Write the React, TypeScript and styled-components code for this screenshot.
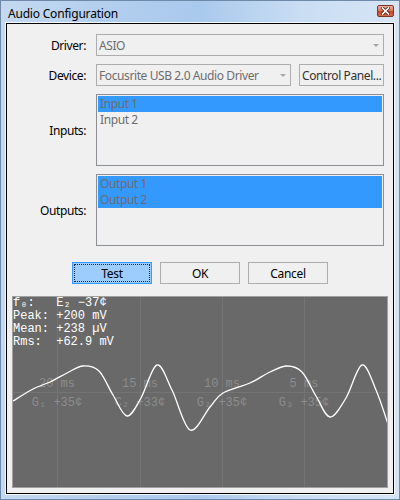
import React from "react";
import styled, { createGlobalStyle } from "styled-components";

const Global = createGlobalStyle`
  html, body { margin: 0; padding: 0; background: #fff; }
  body { font-family: "Noto Sans", "Liberation Sans", sans-serif; }
`;

const UI = `"Noto Sans", "Liberation Sans", sans-serif`;
const MONO = `"Liberation Mono", "DejaVu Sans Mono", monospace`;

const Window = styled.div`
  width: 400px;
  height: 500px;
  box-sizing: border-box;
  border: 1px solid #6f8aa8;
  background: linear-gradient(to right, #c4d9f0 0%, #b3cfee 25%, #a9c9ed 50%, #c9ddf3 75%, #d6e5f6 100%);
  display: flex;
  flex-direction: column;
`;

const TitleBar = styled.div`
  height: 22px;
  flex: none;
  display: flex;
  align-items: flex-start;
  justify-content: space-between;
  padding: 0 5px 0 7px;
`;

const Title = styled.div`
  font-family: ${UI};
  font-size: 12px;
  letter-spacing: -0.2px;
  line-height: 16px;
  padding-top: 5px;
  color: #000;
`;

const CloseButton = styled.div`
  width: 17px;
  height: 12px;
  margin-top: 4px;
  box-sizing: border-box;
  border: 1px solid #7d3524;
  border-radius: 2px;
  background: linear-gradient(to bottom, #eab19c 0%, #d97a5e 45%, #c6452b 55%, #d86a4c 100%);
  display: flex;
  align-items: center;
  justify-content: center;
`;

const ClientWrap = styled.div`
  flex: 1;
  display: flex;
  padding: 0 5px 5px 5px;
`;

const Client = styled.div`
  flex: 1;
  border: 1px solid #000;
  box-shadow: 0 0 0 1px #f6f9fc;
  background: #f0f0f0;
  display: flex;
  flex-direction: column;
`;

const Form = styled.div`
  display: grid;
  grid-template-columns: 79px 1fr;
  column-gap: 10px;
  row-gap: 8px;
  padding: 10px 9px 0 0;
  align-items: center;
`;

const Label = styled.div`
  font-family: ${UI};
  font-size: 12px;
  letter-spacing: -0.4px;
  color: #000;
  text-align: right;
`;

const FieldRow = styled.div`
  display: flex;
  gap: 8px;
`;

const Combo = styled.div`
  height: 22px;
  box-sizing: border-box;
  flex: 1;
  border: 1px solid #adadad;
  background: #f0f0f0;
  display: flex;
  align-items: center;
  justify-content: space-between;
  padding: 0 4px 0 2px;
  font-family: ${UI};
  font-size: 12px;
  letter-spacing: -0.4px;
  color: #6d6d6d;
  white-space: nowrap;
  overflow: hidden;
`;

const Arrow = styled.span`
  width: 0;
  height: 0;
  border-left: 3px solid transparent;
  border-right: 3px solid transparent;
  border-top: 3px solid #a6a6a6;
  margin-top: 1px;
`;

const SideButton = styled.div`
  width: 85px;
  height: 22px;
  box-sizing: border-box;
  flex: none;
  border: 1px solid #adadad;
  background: #f0f0f0;
  font-family: ${UI};
  font-size: 12px;
  letter-spacing: -0.4px;
  color: #333;
  display: flex;
  align-items: center;
  padding: 0 2px;
  white-space: nowrap;
  overflow: hidden;
`;

const ListBox = styled.div`
  height: 72px;
  box-sizing: border-box;
  border: 1px solid #8b8e92;
  background: #f0f0f0;
  padding: 1px;
  display: flex;
  flex-direction: column;
`;

const ListItem = styled.div<{ $selected?: boolean }>`
  height: 16px;
  line-height: 16px;
  padding-left: 2px;
  font-family: ${UI};
  font-size: 12px;
  letter-spacing: -0.4px;
  color: #6d6d6d;
  background: ${(p) => (p.$selected ? "#3399ff" : "transparent")};
`;

const Buttons = styled.div`
  display: flex;
  justify-content: center;
  gap: 8px;
  margin-top: 16px;
`;

const Button = styled.div<{ $focused?: boolean }>`
  width: 80px;
  height: 22px;
  box-sizing: border-box;
  border: 1px solid ${(p) => (p.$focused ? "#3399ff" : "#adadad")};
  background: ${(p) => (p.$focused ? "#9dcdfd" : "#f0f0f0")};
  padding: 1px;
  display: flex;
`;

const ButtonInner = styled.div<{ $focused?: boolean }>`
  flex: 1;
  border: 1px dotted ${(p) => (p.$focused ? "#222" : "transparent")};
  display: flex;
  align-items: center;
  justify-content: center;
  font-family: ${UI};
  font-size: 12px;
  letter-spacing: -0.3px;
  color: #000;
`;

const Scope = styled.div`
  position: relative;
  height: 192px;
  box-sizing: border-box;
  margin: 12px 5px 5px 5px;
  border: 1px solid #a0a0a0;
  background: #696969;
  overflow: hidden;
`;

const ScopeSvg = styled.svg`
  display: block;
  width: 374px;
  height: 190px;
`;

const Readout = styled.pre`
  position: absolute;
  left: 0;
  top: 0;
  margin: 0;
  font-family: ${MONO};
  font-size: 12px;
  line-height: 13px;
  color: #fff;
`;

type P = [number, number];

function smoothPath(pts: P[]): string {
  let d = `M${pts[0][0]},${pts[0][1]}`;
  for (let i = 0; i < pts.length - 1; i++) {
    const p0 = pts[i - 1] || pts[i];
    const p1 = pts[i];
    const p2 = pts[i + 1];
    const p3 = pts[i + 2] || p2;
    const c1x = p1[0] + (p2[0] - p0[0]) / 6;
    const c1y = p1[1] + (p2[1] - p0[1]) / 6;
    const c2x = p2[0] - (p3[0] - p1[0]) / 6;
    const c2y = p2[1] - (p3[1] - p1[1]) / 6;
    d += ` C${c1x.toFixed(1)},${c1y.toFixed(1)} ${c2x.toFixed(1)},${c2y.toFixed(1)} ${p2[0]},${p2[1]}`;
  }
  return d;
}

const wave: P[] = [
  [13, 401], [33, 389], [50, 382], [67, 373], [83, 366], [99, 371], [113, 395], [127, 416],
  [141, 398], [157, 365], [172, 390], [190, 430], [210, 407], [223, 393], [250, 383],
  [270, 372], [287, 366], [302, 372], [316, 396], [330, 417], [346, 398], [362, 365],
  [376, 390], [388, 424],
];

const gridX = [57, 140, 222, 304];
const times = ["20 ms", "15 ms", "10 ms", "5 ms"];
const notes = ["G₁ +35¢", "C₂ +33¢", "G₂ +35¢", "G₃ +35¢"];

export default function App() {
  return (
    <>
      <Global />
      <Window>
        <TitleBar>
          <Title>Audio Configuration</Title>
          <CloseButton>
            <svg width="9" height="8" viewBox="0 0 9 8">
              <path d="M1.5 1 L7.5 7 M7.5 1 L1.5 7" stroke="#5a2418" strokeWidth="3.2" strokeLinecap="square" />
              <path d="M1.5 1 L7.5 7 M7.5 1 L1.5 7" stroke="#fff" strokeWidth="1.6" strokeLinecap="square" />
            </svg>
          </CloseButton>
        </TitleBar>
        <ClientWrap>
          <Client>
            <Form>
              <Label>Driver:</Label>
              <Combo>
                ASIO
                <Arrow />
              </Combo>
              <Label>Device:</Label>
              <FieldRow>
                <Combo>
                  Focusrite USB 2.0 Audio Driver
                  <Arrow />
                </Combo>
                <SideButton>Control Panel...</SideButton>
              </FieldRow>
              <Label>Inputs:</Label>
              <ListBox>
                <ListItem $selected>Input 1</ListItem>
                <ListItem>Input 2</ListItem>
              </ListBox>
              <Label>Outputs:</Label>
              <ListBox>
                <ListItem $selected>Output 1</ListItem>
                <ListItem $selected>Output 2</ListItem>
              </ListBox>
            </Form>
            <Buttons>
              <Button $focused>
                <ButtonInner $focused>Test</ButtonInner>
              </Button>
              <Button>
                <ButtonInner>OK</ButtonInner>
              </Button>
              <Button>
                <ButtonInner>Cancel</ButtonInner>
              </Button>
            </Buttons>
            <Scope>
              <ScopeSvg viewBox="13 297 374 190">
                {gridX.map((x) => (
                  <line key={x} x1={x + 0.5} y1={297} x2={x + 0.5} y2={487} stroke="#747474" strokeWidth="1" />
                ))}
                <line x1={13} y1={392.5} x2={387} y2={392.5} stroke="#747474" strokeWidth="1" />
                {gridX.map((x, i) => (
                  <text key={"t" + x} x={x} y={387} textAnchor="middle" fill="#8c8c8c" fontFamily={MONO} fontSize="12">
                    {times[i]}
                  </text>
                ))}
                {gridX.map((x, i) => (
                  <text key={"n" + x} x={x} y={406} textAnchor="middle" fill="#8c8c8c" fontFamily={MONO} fontSize="12">
                    {notes[i]}
                  </text>
                ))}
                <path d={smoothPath(wave)} fill="none" stroke="#ffffff" strokeWidth="1.3" />
              </ScopeSvg>
              <Readout>{"f₀:   E₂ −37¢\nPeak: +200 mV\nMean: +238 µV\nRms:  +62.9 mV"}</Readout>
            </Scope>
          </Client>
        </ClientWrap>
      </Window>
    </>
  );
}
